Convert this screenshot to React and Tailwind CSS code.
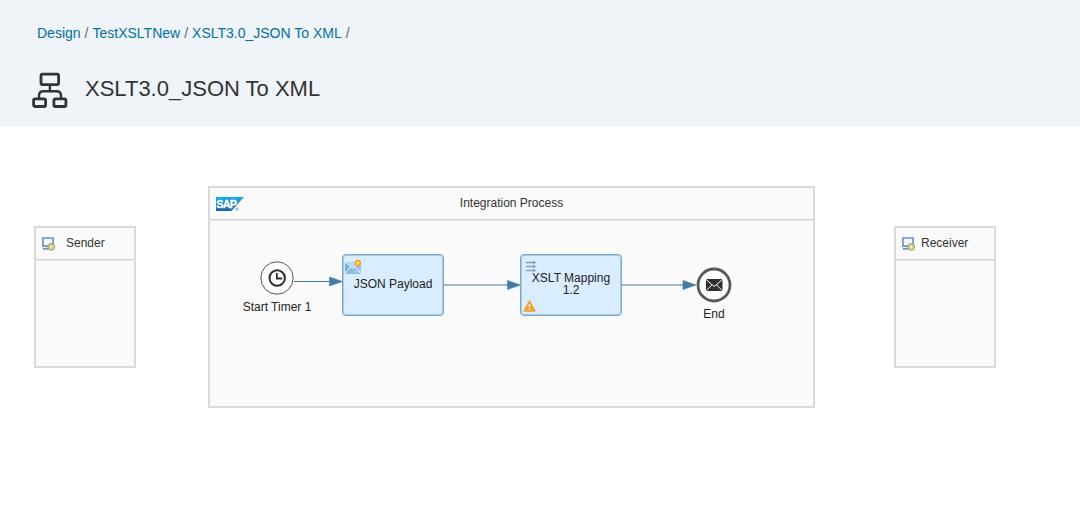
const crumbs = ['Design', 'TestXSLTNew', 'XSLT3.0_JSON To XML'];

function FlowIcon() {
  return (
    <svg className="h-9 w-9 shrink-0" viewBox="0 0 36 36" fill="none" stroke="#333" strokeWidth="2.8">
      <rect x="9" y="2.2" width="17.6" height="10.4" rx="1.6" />
      <rect x="1.6" y="26.9" width="12" height="7.6" rx="1.6" />
      <rect x="21.9" y="26.9" width="12" height="7.6" rx="1.6" />
      <path d="M17.9 13v6.5M7 27v-3.5q0-4.3 4.5-4.3h13q4.5 0 4.5 4.3V27" strokeWidth="2.4" />
    </svg>
  );
}

function SapLogo() {
  return (
    <svg className="h-[14px] w-[28px]" viewBox="0 0 28 14">
      <defs>
        <linearGradient id="sap" x1="0" y1="0" x2="0" y2="1">
          <stop offset="0" stopColor="#12b0ee" />
          <stop offset="1" stopColor="#1b63b8" />
        </linearGradient>
      </defs>
      <path d="M0 0h28L15.5 14H0z" fill="url(#sap)" />
      <text x="0.3" y="11.2" fontFamily="Liberation Sans, sans-serif" fontWeight="700" fontSize="10.8" letterSpacing="-.8" fill="#fff" stroke="#fff" strokeWidth=".3">SAP</text>
      <circle cx="21" cy="12" r="1.1" fill="none" stroke="#4b9bd6" strokeWidth=".8" />
    </svg>
  );
}

function ParticipantIcon() {
  return (
    <svg className="h-[14px] w-[14px]" viewBox="0 0 14 14">
      <path d="M.9 1h10.2v8.2H.9z" fill="#f3f7fc" stroke="#6d94c4" strokeWidth="1.7" />
      <path d="M1 11.8h5" stroke="#6d94c4" strokeWidth="1.8" />
      <circle cx="9.2" cy="9.9" r="3.3" fill="#e1df76" stroke="#8b9285" />
      <circle cx="9.2" cy="9.9" r="1.3" fill="#fbfbe0" stroke="#b5b85f" strokeWidth=".5" />
    </svg>
  );
}

function Participant({ name, className, labelClass }) {
  return (
    <div className={`absolute top-[100px] flex h-[142px] w-[102px] flex-col border-2 border-[#dadada] bg-[#fafafa] ${className}`}>
      <div className={`flex h-8 items-center border-b-[1px] border-[#cfcfcf] pb-[2px] pl-[6px] shadow-[0_1px_0_#ececec] ${labelClass}`}>
        <span className="pt-[2px]"><ParticipantIcon /></span>
        <span className="leading-none">{name}</span>
      </div>
    </div>
  );
}

function Connections() {
  return (
    <svg className="absolute left-0 top-0 h-[394px] w-[1080px]" viewBox="0 126 1080 394" fill="#427cac" stroke="#427cac">
      <path d="M294 281.5h36M443 285h65M621 285h62" fill="none" strokeWidth="1.1" />
      <path d="M329.5 277v9l13-4.5zM507.5 280.5v9l13-4.5zM683 280.5v9l13-4.5z" strokeWidth=".6" />
    </svg>
  );
}

function ClockEvent() {
  return (
    <svg className="h-[34px] w-[34px]" viewBox="0 0 34 34" fill="none">
      <circle cx="17" cy="17" r="16.2" fill="#fff" stroke="#555" strokeWidth="1" />
      <circle cx="17.2" cy="17" r="7.7" stroke="#2c2c2c" strokeWidth="2" />
      <path d="M16.9 12v5.5h5.3" stroke="#2c2c2c" strokeWidth="1.8" />
    </svg>
  );
}

function EndEvent() {
  return (
    <svg className="h-[36px] w-[36px]" viewBox="0 0 36 36" fill="none">
      <circle cx="18" cy="18" r="16" fill="#fff" stroke="#595959" strokeWidth="2.8" />
      <rect x="10" y="12" width="16.5" height="12" rx="1.2" fill="#2f2f2f" />
      <path d="M10 12.5l8.25 7 8.25-7M10 23.8l6-6M26.5 23.8l-6-6" stroke="#fff" strokeWidth="1" />
    </svg>
  );
}

function EnvelopeIcon() {
  return (
    <svg className="absolute left-[2px] top-[4px] h-[15px] w-[17px]" viewBox="0 0 17 15">
      <defs>
        <linearGradient id="mail" x1="0" y1="0" x2="1" y2="1">
          <stop offset="0" stopColor="#5fa6db" />
          <stop offset="1" stopColor="#a5d3f1" />
        </linearGradient>
      </defs>
      <path d="M0 3.2h15.8V14.5H0z" fill="url(#mail)" />
      <path d="M1 3.2l7 5.6 6.8-5.6z" fill="#b4d9f2" />
      <path d="M0 3.2l7.9 6.4 7.9-6.4M0 14.4l5.8-6.6M15.8 14.4l-5.6-6.6" fill="none" stroke="#eff8ff" strokeWidth="1" />
      <path d="M.4 14.3h15" stroke="#72a9d1" strokeWidth=".7" />
      <circle cx="12.8" cy="4" r="3.2" fill="#ff8f3a" />
      <circle cx="12.8" cy="4" r="2.1" fill="#ffdf1c" />
    </svg>
  );
}

function MappingIcon() {
  return (
    <svg className="absolute left-[5px] top-[6px] h-[11px] w-[11px]" viewBox="0 0 11 11" fill="#84a2bf" stroke="#84a2bf">
      <path d="M0 1.5h9M0 5.5h9M0 9.5h9" strokeWidth="1.3" />
      <path d="M7 .1v2.8l3.2-1.4zM7 4.1v2.8l3.2-1.4zM7 8.1v2.8l3.2-1.4z" strokeWidth=".3" />
    </svg>
  );
}

function WarningIcon() {
  return (
    <svg className="absolute left-[2px] top-[45px] h-[12px] w-[13px]" viewBox="0 0 13 12">
      <path d="M6.5 1L12 11H1z" fill="#f9a02c" stroke="#f9a02c" strokeWidth="1.5" strokeLinejoin="round" />
      <path d="M6.5 3.8v3.5M6.5 8.6v1.5" stroke="#fff" strokeWidth="1.5" />
    </svg>
  );
}

function Step({ className, children }) {
  return (
    <div className={`absolute top-[128px] flex h-[62px] w-[102px] items-center justify-center rounded-[4px] border border-[#78a6cc] bg-[#d9edff] text-center leading-[12px] text-[#222] shadow-[inset_0_0_0_1px_#a9cae6] ${className}`}>
      {children}
    </div>
  );
}

export default function App() {
  return (
    <div className="flex h-[520px] w-[1080px] flex-col overflow-hidden bg-white font-['Liberation_Sans',Arial,sans-serif] text-[12px] text-[#333]">
      <header className="flex h-[126px] shrink-0 flex-col bg-[#eff4f8]">
        <nav className="flex gap-1 pl-[37px] pt-[25px] text-[14px] leading-4 text-[#666]">
          {crumbs.map((crumb) => (
            <span key={crumb} className="flex gap-1 whitespace-nowrap">
              <a className="text-[#0070a8]">{crumb}</a>
              <span>/</span>
            </span>
          ))}
        </nav>
        <div className="flex items-center gap-[17px] pl-8 pt-[31px]">
          <FlowIcon />
          <h1 className="-mt-[3px] whitespace-nowrap text-[22px] leading-7">XSLT3.0_JSON To XML</h1>
        </div>
      </header>
      <main className="relative flex-1">
        <Participant name="Sender" className="left-[34px]" labelClass="gap-[10px]" />
        <section className="absolute left-[208px] top-[60px] flex h-[222px] w-[607px] flex-col border-2 border-[#dadada] bg-[#fafafa]">
          <div className="grid h-8 grid-cols-[28px_1fr_28px] items-center border-b border-[#cfcfcf] px-[6px] pb-[2px] shadow-[0_1px_0_#ececec]">
            <span className="flex pt-[3px]"><SapLogo /></span>
            <span className="text-center leading-none">Integration Process</span>
          </div>
        </section>
        <Participant name="Receiver" className="left-[894px]" labelClass="gap-[5px]" />
        <Connections />
        <div className="absolute left-[237px] top-[135px] flex w-20 flex-col items-center gap-[6px] leading-[12px] text-[#222]">
          <ClockEvent />
          <span className="whitespace-nowrap">Start Timer 1</span>
        </div>
        <Step className="left-[342px]">
          <EnvelopeIcon />
          <span className="-mt-[2px] whitespace-nowrap">JSON Payload</span>
        </Step>
        <Step className="left-[520px]">
          <MappingIcon />
          <span className="relative -mt-[2px] whitespace-nowrap">XSLT Mapping<br />1.2</span>
          <WarningIcon />
        </Step>
        <div className="absolute left-[674px] top-[141px] flex w-20 flex-col items-center gap-[5px] leading-[12px] text-[#222]">
          <EndEvent />
          <span>End</span>
        </div>
      </main>
    </div>
  );
}
